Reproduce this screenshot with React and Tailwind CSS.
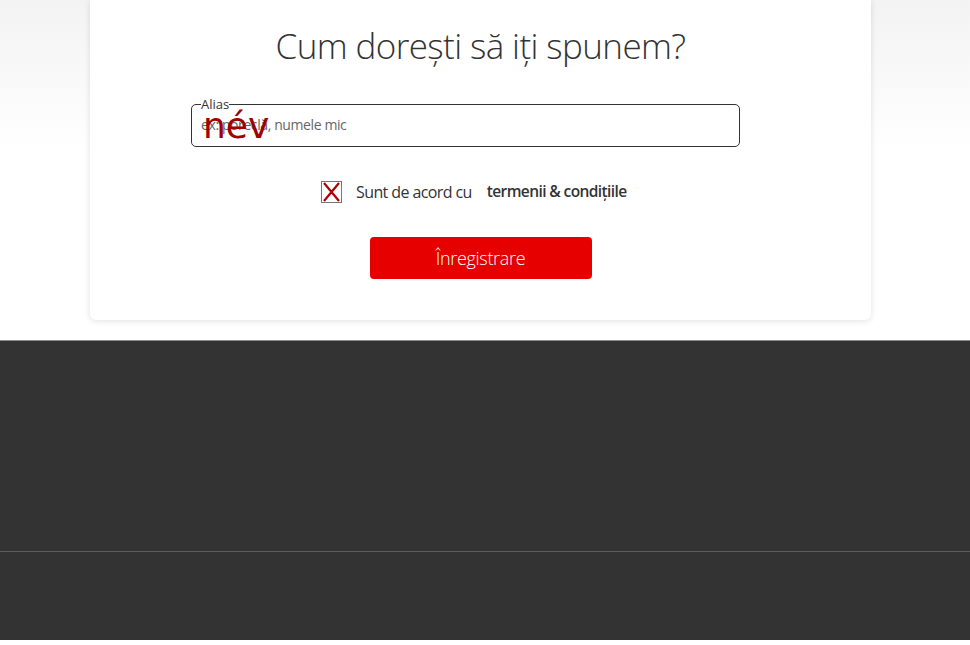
export default function App() {
  return (
    <div className="w-[970px] h-[645px] bg-white overflow-hidden font-['Open_Sans',sans-serif]">
      {/* content area */}
      <div className="h-[340px] bg-gradient-to-b from-[#f3f3f3] to-white to-[45%]">
        <div className="mx-[90px] w-[781px] h-[320px] bg-white rounded-b-md shadow-[0_1px_6px_rgba(0,0,0,0.12)] flex flex-col">
          <h1 className="mt-[22px] text-center text-[35px] leading-[48px] font-light text-[#333] tracking-[-0.6px]">
            Cum dorești să iți spunem?
          </h1>

          <div className="mt-[34px] ml-[101px] w-[549px] relative">
            <fieldset className="border border-[#333] rounded-[5px] h-[49px] -mt-[6px] px-[9px]">
              <legend className="text-[13px] leading-[13px] text-[#333] px-0">Alias</legend>
              <div className="mt-[3px] text-[14px] text-[#666] tracking-[-0.4px]">ex: poreclă, numele mic</div>
            </fieldset>
            <span className="absolute left-[12px] top-[-2px] text-[36px] leading-[48px] text-[#a00000] font-['DejaVu_Sans',sans-serif] pointer-events-none">
              név
            </span>
          </div>

          <div className="mt-[33px] flex items-center gap-[14px] pl-[231px]">
            <svg width="21" height="22" viewBox="0 0 21 22" className="shrink-0">
              <rect x="0.5" y="0.5" width="20" height="21" fill="white" stroke="#777" />
              <path d="M3 2 L18 20 M18 2 L3 20" stroke="#b30000" strokeWidth="2.2" />
            </svg>
            <div className="flex items-center gap-[15px] text-[16px] text-[#333] tracking-[-0.6px]">
              <span>Sunt de acord cu</span>
              <span className="font-semibold text-[15.5px] tracking-[-0.6px]">termenii &amp; condițiile</span>
            </div>
          </div>

          <div className="mt-[33px] flex justify-center">
            <button className="w-[222px] h-[42px] bg-[#e60000] rounded-[4px] text-white text-[18px] font-light tracking-[-0.3px]">
              Înregistrare
            </button>
          </div>
        </div>
      </div>

      {/* footer */}
      <div className="h-[300px] bg-[#333] border-t border-[#8a8a8a] flex flex-col">
        <div className="h-[211px] border-b border-[#5c5c5c]" />
        <div className="flex-1" />
      </div>
    </div>
  );
}
